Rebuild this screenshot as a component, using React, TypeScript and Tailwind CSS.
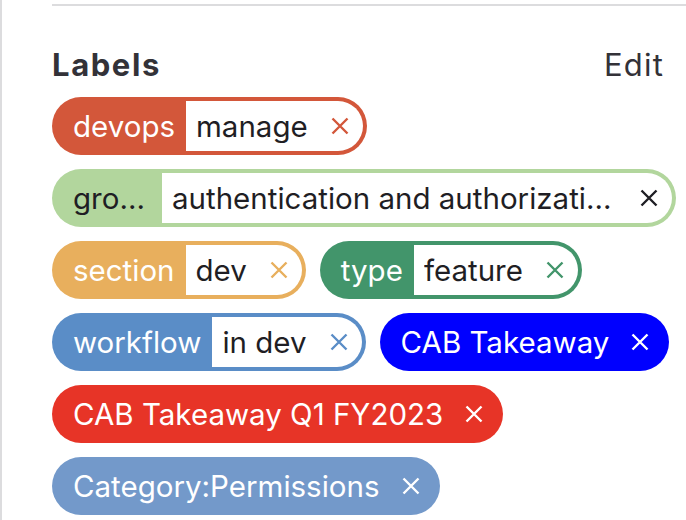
import React from "react";

type Label = {
  key?: string;
  value: string;
  color: string;
  dark?: boolean;
};

const labels: Label[] = [
  { key: "devops", value: "manage", color: "#d3573a" },
  { key: "group", value: "authentication and authorization", color: "#b2d69d", dark: true },
  { key: "section", value: "dev", color: "#e8af5d" },
  { key: "type", value: "feature", color: "#42956b" },
  { key: "workflow", value: "in dev", color: "#5a8dc7" },
  { value: "CAB Takeaway", color: "#0000ff" },
  { value: "CAB Takeaway Q1 FY2023", color: "#e73427" },
  { value: "Category:Permissions", color: "#7399ca" },
];

function CloseIcon({ color }: { color: string }) {
  return (
    <svg width="18" height="18" viewBox="0 0 18 18" className="shrink-0">
      <path d="M1.5 1.5 L16.5 16.5 M16.5 1.5 L1.5 16.5" stroke={color} strokeWidth="2.4" fill="none" />
    </svg>
  );
}

function LabelPill({ label }: { label: Label }) {
  const keyText = label.dark ? "text-[#1f1e24]" : "text-white";

  // scoped label: coloured key + white value box inset by a 4px ring
  if (label.key) {
    return (
      <span
        className="inline-flex max-w-full h-[58px] rounded-full items-stretch"
        style={{ backgroundColor: label.color }}
      >
        <span className={`flex shrink-0 items-center pl-[21px] pr-[11px] ${keyText}`}>
          <span className={label.dark ? "max-w-[72px] truncate mr-[6px]" : ""}>{label.key}</span>
        </span>
        <span className="flex min-w-0 items-center bg-white rounded-r-full my-[4px] mr-[4px] pl-[10px] pr-[14px] text-[#1f1e24]">
          <span className="truncate">{label.value}</span>
          <span className="ml-[23px] flex">
            <CloseIcon color={label.dark ? "#1f1e24" : label.color} />
          </span>
        </span>
      </span>
    );
  }

  return (
    <span
      className="inline-flex h-[58px] rounded-full items-center pl-[21px] pr-[20px] text-white"
      style={{ backgroundColor: label.color }}
    >
      <span>{label.value}</span>
      <span className="ml-[22px] flex">
        <CloseIcon color="#ffffff" />
      </span>
    </span>
  );
}

export default function App() {
  return (
    <div className="w-[686px] h-[520px] overflow-hidden bg-white border-l-2 border-[#dcdcde] pl-[50px] pt-[4px] font-['Inter',sans-serif]">
      <div className="border-t-2 border-[#dcdcde]">
        {/* HEADER */}
        <div className="flex justify-between items-center mt-[42px] pr-[22px] text-[31px] leading-[34px] text-[#333238]">
          <span className="font-bold tracking-[1.6px]">Labels</span>
          <span className="tracking-[1.2px]">Edit</span>
        </div>

        {/* LABELS */}
        <div className="flex flex-wrap gap-x-[14px] gap-y-[14px] mt-[15px] pr-[10px] text-[29.5px] leading-[34px]">
          {labels.map((l) => (
            <LabelPill key={(l.key ?? "") + l.value} label={l} />
          ))}
        </div>
      </div>
    </div>
  );
}
